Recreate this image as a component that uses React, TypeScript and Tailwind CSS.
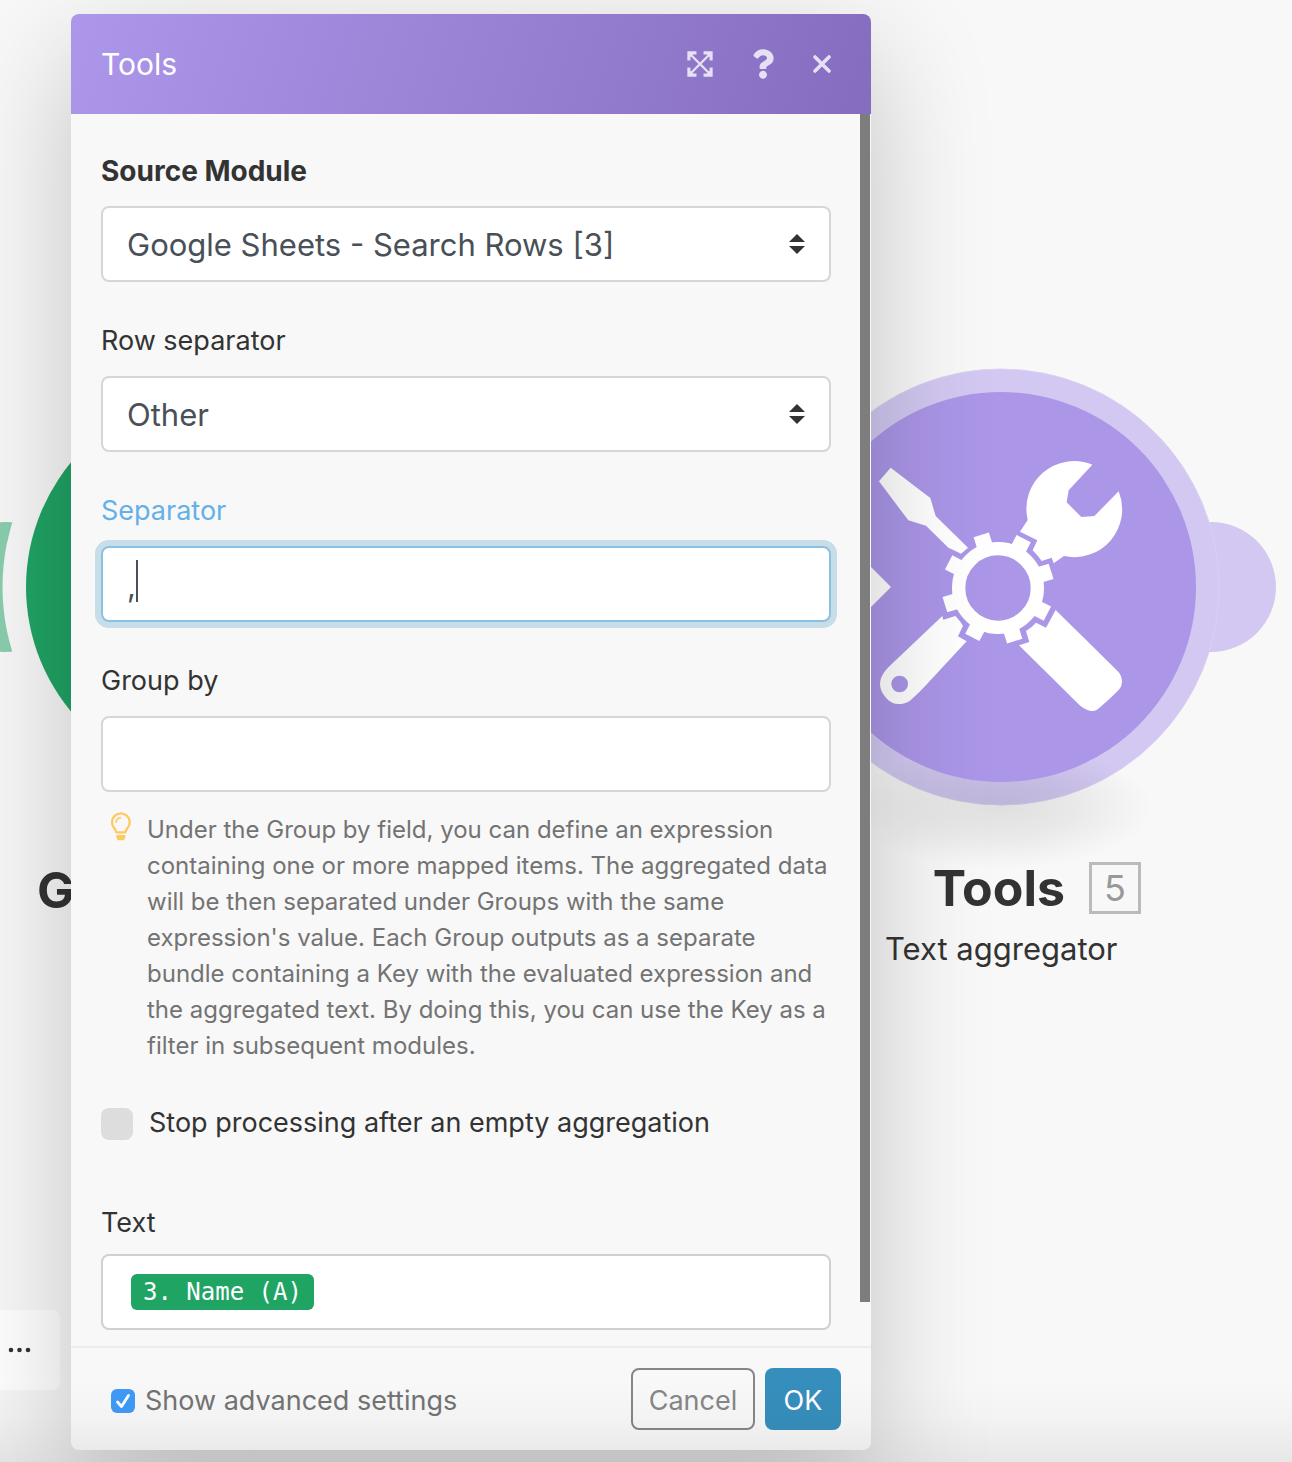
import { useState, type ReactNode } from "react";
import { FaQuestion } from "react-icons/fa";

const TEETH = [0, 45, 90, 135, 180, 225, 270, 315];

function ToolsGlyph() {
  return (
    <g fill="#fff">
      <path d="M57 394 92 353 211 444 227 498 324 593 303 611 272 596 266 594 198 527 145 511Z" />
      <path d="M697 344 626 421 620 457 664 501 703 498 776 424A143.500 143.500 0 0 1 612 618L581 640 575 623 545 633Q534 617 518 601L532 571 480 545 503 510A143.500 143.500 0 0 1 697 344Z" />
      <path d="M247 798 250 809 286 798Q300 812 309 827L294 859 320 874 215 987Q180 1026 150 1052 135 1062 115 1062 95 1062 82 1048 60 1025 60 1002 60 978 85 952Z" />
      <path d="M587 780 775 965Q786 978 786 995 786 1008 778 1018 745 1052 715 1076 708 1083 693 1083 675 1080 659 1066L477 886 508 876 498 843Q515 833 528 818L558 833Z" />
      <circle cx="119" cy="1002" r="25" fill="#ab96e8" />
      <circle cx="414" cy="714" r="118" fill="none" stroke="#fff" strokeWidth="40" />
      {TEETH.map((a) => (
        <rect key={a} x="130" y="-24" width="37" height="48" transform={`translate(414 714) rotate(${a + 27.5})`} />
      ))}
    </g>
  );
}

function ToolsModule() {
  return (
    <svg className="absolute left-[783px] top-[357px] h-[520px] w-[509px]" viewBox="783 357 509 520" aria-hidden="true">
      <defs>
        <radialGradient id="floor">
          <stop offset="0" stopColor="#000" stopOpacity="0.1" />
          <stop offset="0.5" stopColor="#000" stopOpacity="0.06" />
          <stop offset="1" stopColor="#000" stopOpacity="0" />
        </radialGradient>
      </defs>
      <circle cx="1211" cy="587" r="65" fill="#d2c8f1" />
      <circle cx="1001" cy="587" r="218" fill="#d2c8f1" stroke="#d9d1f2" strokeWidth="1" />
      <ellipse cx="1001" cy="807" rx="152" ry="62" fill="url(#floor)" />
      <circle cx="1001" cy="587" r="195" fill="#ab96e8" />
      <path d="M851 547 891 587 851 627Z" fill="#fff" />
      <g transform="translate(860 350) scale(0.33333)">
        <ToolsGlyph />
      </g>
    </svg>
  );
}

function SheetsModule() {
  return (
    <svg className="absolute left-0 top-[367px] h-[440px] w-[440px]" viewBox="0 367 440 440" aria-hidden="true">
      <circle cx="5" cy="587" r="65" fill="#8aceae" />
      <circle cx="221" cy="587" r="218.500" fill="#f8f8f8" />
      <circle cx="221" cy="587" r="195" fill="#20a464" />
    </svg>
  );
}

function ExpandIcon() {
  return (
    <svg className="size-[26px]" viewBox="80 152 77 77" fill="none" stroke="currentColor" aria-hidden="true">
      <path d="M86 158 151 223M151 158 86 223" strokeWidth="7" />
      <path d="M108 157.500H85.500V180M129 157.500H151.500V180M108 223.500H85.500V201M129 223.500H151.500V201" strokeWidth="9" />
      <path d="M88 160h12l-12 12zM149 160h-12l12 12zM88 221h12l-12-12zM149 221h-12l12-12z" fill="currentColor" stroke="none" />
    </svg>
  );
}

function CloseIcon() {
  return (
    <svg className="size-[18px]" viewBox="0 0 18 18" fill="none" stroke="currentColor" strokeWidth="3.600" strokeLinecap="round" aria-hidden="true">
      <path d="M2 2 16 16M16 2 2 16" />
    </svg>
  );
}

function BulbIcon() {
  return (
    <svg className="h-[30px] w-[20px] shrink-0" viewBox="332 64 60 90" fill="none" stroke="#ffc95f" aria-hidden="true">
      <path d="M348 125Q346 117 340 110A26.500 26.500 0 1 1 383 110Q377 117 375 125Z" strokeWidth="7" strokeLinejoin="round" />
      <path d="M347 96A15 15 0 0 1 362 81" strokeWidth="5" />
      <path d="M348 133H375V139L371 149H352L348 139Z" fill="#ffc95f" stroke="none" />
    </svg>
  );
}

function SortArrows() {
  return (
    <svg className="pointer-events-none absolute right-[26px] top-1/2 h-5 w-4 -translate-y-1/2" viewBox="0 0 16 20" fill="#333" aria-hidden="true">
      <path d="M8 0 16 8H0ZM8 20 0 12H16Z" />
    </svg>
  );
}

const label = "mb-3 block w-fit leading-[46px]";
const box = "block h-[76px] w-full appearance-none rounded-lg border-2 bg-white px-6 pt-0.5 text-[31px] text-[#495057] outline-none";

function Select({ id, value }: { id: string; value: string }) {
  return (
    <div className="relative">
      <select id={id} defaultValue={value} className={`${box} border-[#d6d6d6]`}>
        <option>{value}</option>
      </select>
      <SortArrows />
    </div>
  );
}

function IconButton({ name, children }: { name: string; children: ReactNode }) {
  return (
    <button type="button" aria-label={name} className="flex items-center justify-center text-[#e6e0f5]">
      {children}
    </button>
  );
}

export default function App() {
  const [separator, setSeparator] = useState(",");
  const [stop, setStop] = useState(false);
  const [advanced, setAdvanced] = useState(true);

  return (
    <main className="relative min-h-screen overflow-hidden bg-[#f8f8f8] pb-3 pl-[71px] pt-3.5 font-['Inter',sans-serif] text-[#333]">
      <SheetsModule />
      <h2 className="absolute left-[37px] top-[858px] text-[50px] font-bold leading-[64px]">G</h2>
      <ToolsModule />
      <div className="absolute left-[885px] top-[856px] w-[256px]">
        <div className="flex items-center justify-end gap-6">
          <h2 className="text-[50px] font-bold leading-[64px]">Tools</h2>
          <span className="flex size-[52px] items-center justify-center border-[3px] border-[#bbb] text-[36px] text-[#999]">5</span>
        </div>
        <p className="whitespace-nowrap text-[31px] leading-[58px]">Text aggregator</p>
      </div>
      <button type="button" aria-label="More" className="absolute left-0 top-[1310px] flex h-20 w-[60px] items-center rounded-r-lg bg-white pl-2">
        <svg className="h-1.5 w-[23px]" viewBox="0 0 23 6" fill="#333" aria-hidden="true">
          <circle cx="3" cy="3" r="2.300" />
          <circle cx="11.500" cy="3" r="2.300" />
          <circle cx="20" cy="3" r="2.300" />
        </svg>
      </button>

      <section className="relative max-w-[800px] rounded-lg bg-[#f8f8f8] shadow-[0_40px_120px_rgba(0,0,0,0.22)]">
        <header className="flex h-[100px] items-center rounded-t-lg bg-[linear-gradient(108deg,#ad97ea,#856cbe)] pl-[30px] pr-10">
          <h1 className="flex-1 text-[30px] text-white">Tools</h1>
          <div className="flex items-center gap-[39px]">
            <IconButton name="Expand"><ExpandIcon /></IconButton>
            <IconButton name="Help"><FaQuestion className="h-[30px] w-[22px]" /></IconButton>
            <IconButton name="Close"><CloseIcon /></IconButton>
          </div>
        </header>

        <div className="relative px-[30px] pb-4 pr-10 pt-[34px]">
          <div className="absolute right-px top-0 h-[1188px] w-2.5 bg-[#7d7d7d]" />
          <div className="flex flex-col gap-9">
            <div>
              <label htmlFor="source" className={`${label} text-[28px] font-bold`}>Source Module</label>
              <Select id="source" value="Google Sheets - Search Rows [3]" />
            </div>
            <div>
              <label htmlFor="row" className={`${label} text-[27px]`}>Row separator</label>
              <Select id="row" value="Other" />
            </div>
            <div>
              <label htmlFor="separator" className={`${label} text-[27px] text-[#64b0e8]`}>Separator</label>
              <div className="relative">
                <input
                  id="separator"
                  value={separator}
                  onChange={(e) => setSeparator(e.target.value)}
                  className={`${box} border-[#8bc1df] ring-6 ring-[#c7dde9]`}
                />
                <span className="pointer-events-none absolute left-[35px] top-3.5 h-[42px] w-0.5 bg-[#495057]" />
              </div>
            </div>
            <div>
              <label htmlFor="group" className={`${label} text-[27px]`}>Group by</label>
              <input id="group" className={`${box} border-[#d6d6d6]`} />
            </div>
          </div>

          <div className="mt-5 flex gap-4 pl-2.5">
            <BulbIcon />
            <p className="text-[24px] leading-9 text-[#737373]">
              Under the Group by field, you can define an expression containing one or more mapped items. The aggregated data
              will be then separated under Groups with the same expression's value. Each Group outputs as a separate bundle
              containing a Key with the evaluated expression and the aggregated text. By doing this, you can use the Key as a
              filter in subsequent modules.
            </p>
          </div>

          <label className="mt-11 flex h-8 items-center gap-4 text-[27px]">
            <input
              type="checkbox"
              checked={stop}
              onChange={(e) => setStop(e.target.checked)}
              className="size-8 appearance-none rounded-lg bg-[#ddd] checked:bg-[#4099f7]"
            />
            <span className="pb-0.5">Stop processing after an empty aggregation</span>
          </label>

          <div className="mt-[60px]">
            <div id="text-label" className="mb-2 text-[27px] leading-[46px]">Text</div>
            <div role="textbox" tabIndex={0} aria-labelledby="text-label" className="flex h-[76px] items-center rounded-lg border-2 border-[#d0d0d0] bg-white px-7">
              <span className="rounded-md bg-[#20a464] px-3 font-['DejaVu_Sans_Mono',monospace] text-[24px] leading-9 text-white">3. Name (A)</span>
            </div>
          </div>
        </div>

        <footer className="flex items-center gap-2.5 border-t-2 border-[#ececec] py-5 pl-10 pr-[30px] text-[27px]">
          <label className="flex flex-1 items-center gap-2.5 pt-1 text-[#737373]">
            <span className="relative size-6">
              <input
                type="checkbox"
                checked={advanced}
                onChange={(e) => setAdvanced(e.target.checked)}
                className="peer block size-6 appearance-none rounded-md bg-[#ddd] checked:bg-[#4099f7]"
              />
              <svg className="pointer-events-none absolute inset-0 hidden size-6 peer-checked:block" viewBox="0 0 24 24" fill="none" stroke="#fff" strokeWidth="2.800" strokeLinecap="round" strokeLinejoin="round" aria-hidden="true">
                <path d="M6.500 13 10.500 17.500 17.500 6.500" />
              </svg>
            </span>
            Show advanced settings
          </label>
          <button type="button" className="h-[62px] w-[124px] rounded-lg border-2 border-[#868686] pt-1 text-[#868686]">Cancel</button>
          <button type="button" className="h-[62px] w-[76px] rounded-lg bg-[#368ebc] pt-1 text-white">OK</button>
        </footer>
      </section>
      <div className="pointer-events-none absolute inset-x-0 bottom-0 h-20 bg-[linear-gradient(to_bottom,transparent,rgba(0,0,0,0.02)_45%,rgba(0,0,0,0.07))]" />
    </main>
  );
}
